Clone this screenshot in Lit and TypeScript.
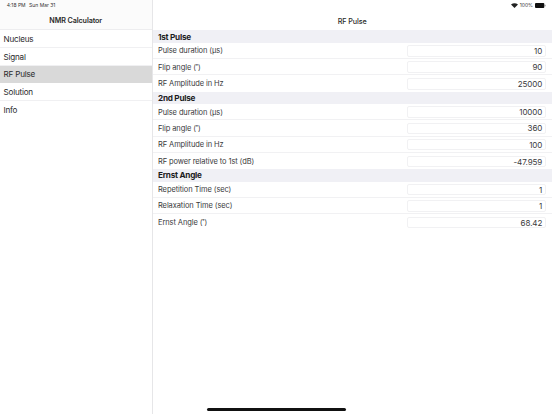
import { LitElement, html, css } from "lit";
import { customElement } from "lit/decorators.js";

const NAV = ["Nucleus", "Signal", "RF Pulse", "Solution", "Info"];
const SECTIONS: { title: string; rows: [string, string][] }[] = [
  { title: "1st Pulse", rows: [["Pulse duration (µs)", "10"], ["Flip angle (˚)", "90"], ["RF Amplitude in Hz", "25000"]] },
  { title: "2nd Pulse", rows: [["Pulse duration (µs)", "10000"], ["Flip angle (˚)", "360"], ["RF Amplitude in Hz", "100"], ["RF power relative to 1st (dB)", "-47.959"]] },
  { title: "Ernst Angle", rows: [["Repetition Time (sec)", "1"], ["Relaxation Time (sec)", "1"], ["Ernst Angle (˚)", "68.42"]] },
];

@customElement("app-root")
export class AppRoot extends LitElement {
  static styles = css`
    :host { display: block; width: 552px; height: 414px; position: relative; overflow: hidden; background: #fff;
      font-family: Inter, "Liberation Sans", Arial, sans-serif; color: #1c1c1e; }
    .split { display: flex; height: 414px; }
    .side { width: 152.5px; flex: none; border-right: 1px solid #e6e6e8; box-sizing: border-box; }
    .main { flex: 1; min-width: 0; }
    .bar { height: 30.4px; box-sizing: border-box; background: #fbfbfb; border-bottom: 1px solid #ededef; position: relative; display: flex; align-items: flex-end; justify-content: center; padding-bottom: 4.6px; font-size: 7.2px; font-weight: 600; color: #2a2a2a; line-height: 9px; letter-spacing: -0.1px; }
    .main .bar { background: #fff; border-bottom: none; font-weight: 500; font-size: 7.2px; }
    .time { position: absolute; left: 6.7px; top: 1.8px; font-size: 5px; font-weight: 400; line-height: 7px; color: #333; display: flex; gap: 3.5px; letter-spacing: 0; }
    .status { position: absolute; right: 6.5px; top: 1.8px; display: flex; align-items: center; gap: 2px; font-size: 5px; font-weight: 400; line-height: 7px; color: #333; letter-spacing: 0; }
    .nav { height: 17.65px; box-sizing: border-box; display: flex; align-items: center; padding: 0.6px 0 0 3.5px; font-size: 8.1px; letter-spacing: -0.2px; color: #2a2a2c; border-bottom: 1px solid #f0f0f2; }
    .nav.sel { background: #d9d9d9; border-bottom-color: #d9d9d9; }
    .nav.last { border-bottom: none; }
    .head { height: 12.35px; background: #f0f0f5; display: flex; align-items: center; padding-left: 5.5px; font-size: 8.2px; font-weight: 700; letter-spacing: -0.25px; color: #1c1c1e; }
    .row { height: 16.3px; box-sizing: border-box; display: flex; align-items: center; justify-content: space-between; padding: 1px 6.3px 0 5.5px; border-bottom: 1px solid #f1f1f3; font-size: 7.5px; letter-spacing: -0.1px; color: #3a3a3c; }
    .row.last { border-bottom: none; }
    .val { width: 138.5px; height: 11.5px; box-sizing: border-box; border: 1px solid #f1f1f3; border-radius: 2px; display: flex; align-items: center; justify-content: flex-end; padding-right: 2.5px; font-size: 8px; letter-spacing: -0.1px; color: #3a3a3c; }
    .home { position: absolute; left: 207px; top: 408px; width: 138.5px; height: 2.5px; border-radius: 2px; background: #111; }
    .batt { width: 10.5px; height: 5px; }
  `;

  render() {
    return html`
      <div class="split">
        <div class="side">
          <div class="bar">
            <div class="time"><span>4:18 PM</span><span>Sun Mar 31</span></div>
            NMR Calculator
          </div>
          ${NAV.map((n, i) => html`<div class="nav ${n === "RF Pulse" ? "sel" : ""} ${i === NAV.length - 1 ? "last" : ""}">${n}</div>`)}
        </div>
        <div class="main">
          <div class="bar">
            RF Pulse
            <div class="status">
              <svg width="7" height="5" viewBox="0 0 14 10"><path d="M7 10 L0 3 Q7 -2 14 3 Z" fill="#222"/></svg>
              <span>100%</span>
              <svg class="batt" viewBox="0 0 22 10"><rect x="0" y="0" width="19.5" height="10" rx="2" fill="#111"/><rect x="20" y="3" width="2" height="4" rx="1" fill="#777"/></svg>
            </div>
          </div>
          ${SECTIONS.map((s) => html`
            <div class="head">${s.title}</div>
            ${s.rows.map((r, i) => html`<div class="row ${i === s.rows.length - 1 ? "last" : ""}"><span>${r[0]}</span><div class="val">${r[1]}</div></div>`)}
          `)}
        </div>
      </div>
      <div class="home"></div>
    `;
  }
}
